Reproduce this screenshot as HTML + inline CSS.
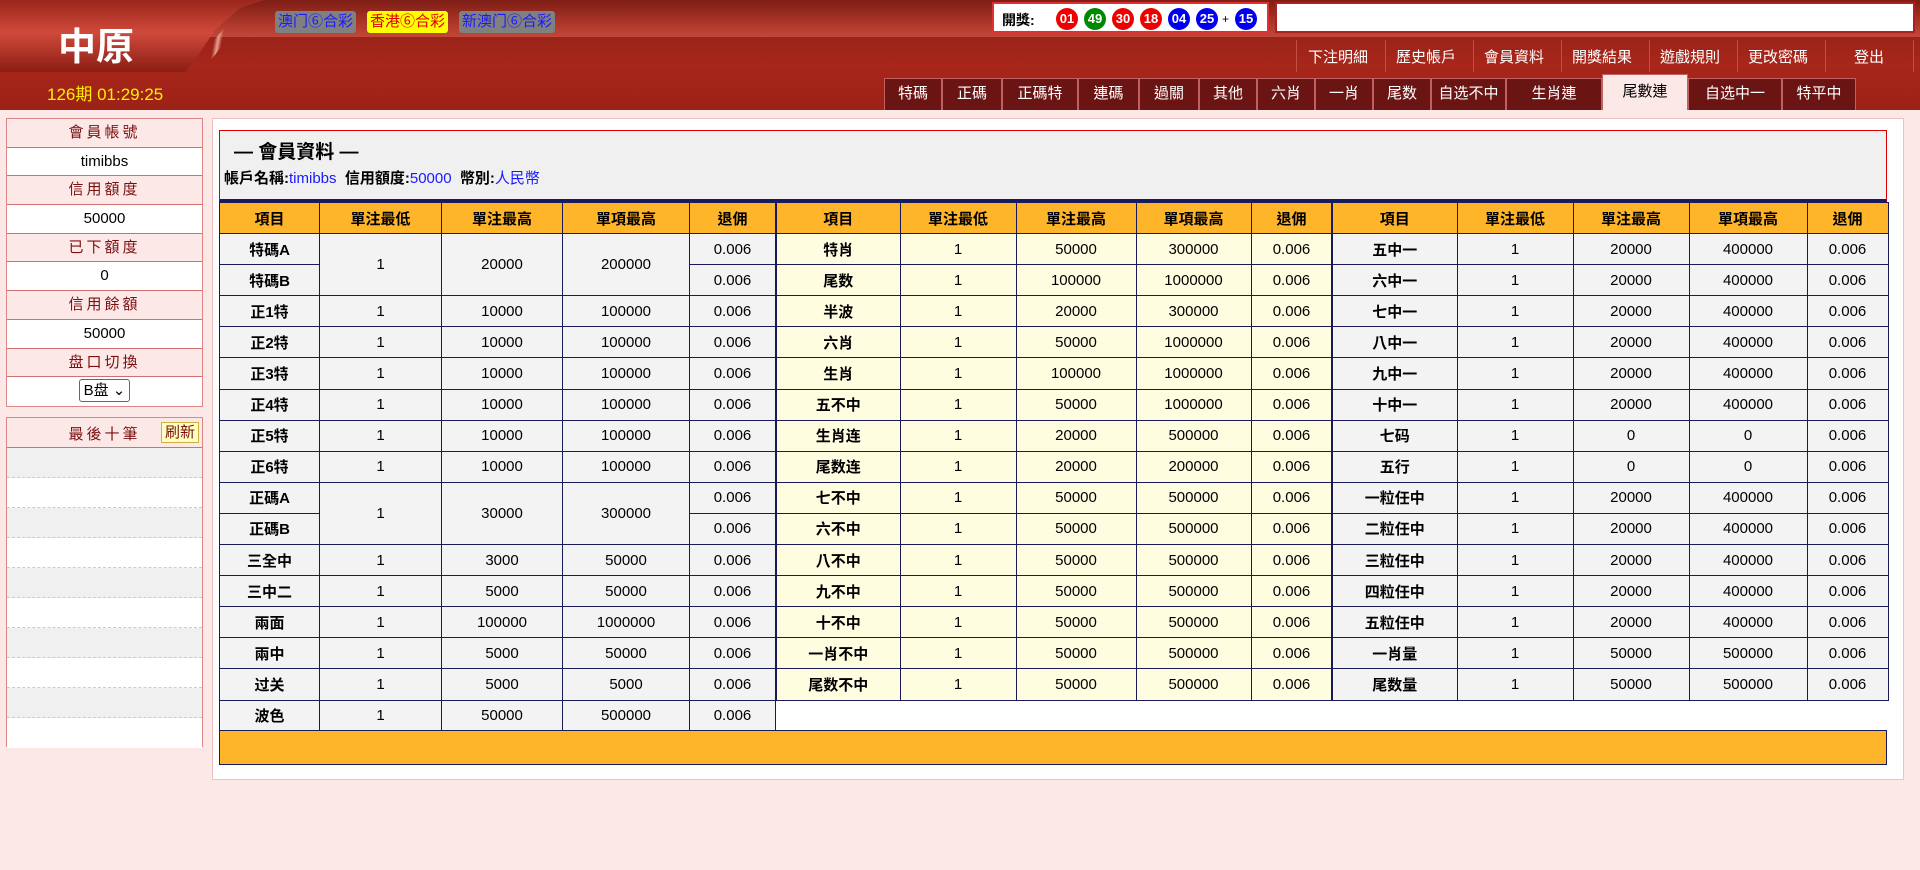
<!DOCTYPE html>
<html><head><meta charset="utf-8"><style>
*{margin:0;padding:0;box-sizing:border-box}
body{width:1920px;height:870px;background:#fde8e8;font-family:"Liberation Sans","Noto Sans CJK TC",sans-serif;position:relative;overflow:hidden;font-size:15px}
.hdr{position:absolute;left:0;top:0;width:1920px;height:110px;background:linear-gradient(#8a1f16,#a8261a 60%,#9c2116)}
.top{position:absolute;left:0;top:0;width:1920px;height:37px;background:linear-gradient(#7d1d15,#b23a2c 70%,#c0483a)}
.logo{position:absolute;left:0;top:0;width:265px;height:72px;background:linear-gradient(#9a261c,#d04a3b 45%,#8c1d15);clip-path:polygon(0 0,265px 0,240px 8px,215px 30px,195px 60px,185px 72px,0 72px)}
.logoedge{position:absolute;left:180px;top:0;width:90px;height:72px;background:linear-gradient(100deg,transparent 40%,#e8a090 44%,transparent 48%);clip-path:polygon(80px 0,90px 0,60px 20px,35px 55px,20px 72px,10px 72px,30px 45px,55px 15px)}
.logo span{position:absolute;left:58px;top:16px;color:#fff;font-size:38px;font-weight:bold}
.per{position:absolute;left:47px;top:80px;color:#ffee00;font-size:17px}
.lb{position:absolute;top:11px;height:22px;border-radius:3px;background:#808080;color:#1a1aff;font-size:15px;line-height:22px;padding:0 3px}
.draw{position:absolute;left:992px;top:2px;width:277px;height:31px;background:#fff;border:2px solid #e03030}
.draw b{position:absolute;left:8px;top:6px;font-size:14px;font-weight:bold}
.ball{position:absolute;top:4px;width:22px;height:22px;border-radius:50%;color:#fff;font-size:13px;font-weight:bold;line-height:22px;text-align:center}
.marq{position:absolute;left:1275px;top:2px;width:640px;height:31px;background:#fff;border:2px solid #b02020}
.links{position:absolute;top:46px;color:#fff;font-size:15px}
.links span{position:absolute;white-space:nowrap}
.sep{position:absolute;top:40px;width:1px;height:32px;background:#c05040}
.tab{position:absolute;top:78px;height:32px;background:#6a1414;border:1px solid #c06060;border-bottom:none;color:#fff;font-size:15px;text-align:center;line-height:30px}
.tab.on{background:#fde8e8;color:#000;top:74px;height:36px;line-height:34px}
.side{position:absolute;left:6px;width:197px;border:1px solid #d88;}
.side div{height:28.7px;line-height:28px;text-align:center;border-bottom:1px solid #d07070;font-size:15px}
.side .l{background:#fde8e8;color:#7a1010;letter-spacing:3px}
.side .v{background:#fff;color:#000}
.main{position:absolute;left:212px;top:118px;width:1692px;height:662px;background:#fff;border:1px solid #f0c0c0}
.tbox{position:absolute;left:219px;top:130px;width:1668px;height:72px;background:#f0f0f0;border-top:1px solid #d00;border-left:1px solid #d00;border-right:1px solid #d00;border-bottom:3px solid #1a1a5a}
.tbox h1{position:absolute;left:14px;top:6px;font-size:19px}
.tbox p{position:absolute;left:4px;top:36px;font-size:15px;font-weight:bold}
.tbox p i{font-style:normal;font-weight:normal;color:#1a1aff}
table{position:absolute;top:202px;border-collapse:collapse;table-layout:fixed}
td,th{border:1px solid #1a1a5a;height:31.1px;text-align:center;font-size:15px;font-weight:normal}
th{background:#ffb52a;font-weight:bold}
td:first-child{font-weight:bold}
.t1 td,.t3 td{background:#f3f3f3}
.t2 td{background:#fffde0}
.bar{position:absolute;left:219px;top:730px;width:1668px;height:35px;background:#ffb52a;border:1px solid #1a1a5a}
</style></head><body>
<div class="hdr"></div><div class="top"></div>
<div class="logo"><span>中原</span></div><div class="logoedge"></div>
<div class="per">126期 01:29:25</div>
<div class="lb" style="left:275px">澳门⑥合彩</div>
<div class="lb" style="left:367px;background:#ffff00;color:#e00000">香港⑥合彩</div>
<div class="lb" style="left:459px">新澳门⑥合彩</div>
<div class="draw"><b>開獎:</b>
<div class="ball" style="left:62px;background:#e00">01</div>
<div class="ball" style="left:90px;background:#080">49</div>
<div class="ball" style="left:118px;background:#e00">30</div>
<div class="ball" style="left:146px;background:#e00">18</div>
<div class="ball" style="left:174px;background:#00e">04</div>
<div class="ball" style="left:202px;background:#00e">25</div>
<span style="position:absolute;left:228px;top:8px;font-size:12px">+</span>
<div class="ball" style="left:241px;background:#00e">15</div></div>
<div class="marq"></div>
<div class="links">
<span style="left:1308px">下注明細</span><span style="left:1396px">歷史帳戶</span><span style="left:1484px">會員資料</span><span style="left:1572px">開獎結果</span><span style="left:1660px">遊戲規則</span><span style="left:1748px">更改密碼</span><span style="left:1854px">登出</span></div>
<div class="sep" style="left:1296px"></div><div class="sep" style="left:1385px"></div><div class="sep" style="left:1473px"></div><div class="sep" style="left:1561px"></div><div class="sep" style="left:1649px"></div><div class="sep" style="left:1737px"></div><div class="sep" style="left:1825px"></div><div class="sep" style="left:1913px"></div>
<div class="tab" style="left:884px;width:58px">特碼</div>
<div class="tab" style="left:942px;width:60px">正碼</div>
<div class="tab" style="left:1002px;width:76px">正碼特</div>
<div class="tab" style="left:1078px;width:61px">連碼</div>
<div class="tab" style="left:1139px;width:60px">過關</div>
<div class="tab" style="left:1199px;width:58px">其他</div>
<div class="tab" style="left:1257px;width:58px">六肖</div>
<div class="tab" style="left:1315px;width:58px">一肖</div>
<div class="tab" style="left:1373px;width:58px">尾数</div>
<div class="tab" style="left:1431px;width:75px">自选不中</div>
<div class="tab" style="left:1506px;width:96px">生肖連</div>
<div class="tab on" style="left:1602px;width:86px">尾數連</div>
<div class="tab" style="left:1688px;width:94px">自选中一</div>
<div class="tab" style="left:1782px;width:74px">特平中</div>

<div class="side" style="top:118px">
<div class="l">會員帳號</div><div class="v">timibbs</div><div class="l">信用額度</div><div class="v">50000</div><div class="l">已下額度</div><div class="v">0</div><div class="l">信用餘額</div><div class="v">50000</div><div class="l">盘口切換</div><div class="v" style="border:none;padding-top:2px;line-height:22px"><span style="display:inline-block;border:1px solid #666;border-radius:3px;padding:0 4px;height:23px;font-size:15px">B盘 ⌄</span></div>
</div>
<div class="side" style="top:417px;height:330px;background:#fff">
<div class="l" style="height:30px;line-height:34px;position:relative">最後十筆<span style="position:absolute;right:3px;top:4px;height:21px;line-height:19px;background:#ffffc0;border:1px solid #d0b040;letter-spacing:0;padding:0 3px;color:#7a1010">刷新</span></div>
<div style="background:#f0f0f0;border-bottom:1px dashed #ccc;height:30px"></div><div style="background:#fff;border-bottom:1px dashed #ccc;height:30px"></div>
<div style="background:#f0f0f0;border-bottom:1px dashed #ccc;height:30px"></div><div style="background:#fff;border-bottom:1px dashed #ccc;height:30px"></div>
<div style="background:#f0f0f0;border-bottom:1px dashed #ccc;height:30px"></div><div style="background:#fff;border-bottom:1px dashed #ccc;height:30px"></div>
<div style="background:#f0f0f0;border-bottom:1px dashed #ccc;height:30px"></div><div style="background:#fff;border-bottom:1px dashed #ccc;height:30px"></div>
<div style="background:#f0f0f0;border-bottom:1px dashed #ccc;height:30px"></div><div style="background:#fff;border:none;height:30px"></div>
</div>

<div class="main"></div>
<div class="tbox"><h1>— 會員資料 —</h1><p>帳戶名稱:<i>timibbs</i>&nbsp; 信用額度:<i>50000</i>&nbsp; 幣別:<i>人民幣</i></p></div>

<table class="t1" style="left:219px;width:556px">
<colgroup><col style="width:100px"><col style="width:122px"><col style="width:121px"><col style="width:127px"><col style="width:86px"></colgroup>
<tr><th>項目</th><th>單注最低</th><th>單注最高</th><th>單項最高</th><th>退佣</th></tr>
<tr><td>特碼A</td><td rowspan="2">1</td><td rowspan="2">20000</td><td rowspan="2">200000</td><td>0.006</td></tr>
<tr><td>特碼B</td><td>0.006</td></tr>
<tr><td>正1特</td><td>1</td><td>10000</td><td>100000</td><td>0.006</td></tr>
<tr><td>正2特</td><td>1</td><td>10000</td><td>100000</td><td>0.006</td></tr>
<tr><td>正3特</td><td>1</td><td>10000</td><td>100000</td><td>0.006</td></tr>
<tr><td>正4特</td><td>1</td><td>10000</td><td>100000</td><td>0.006</td></tr>
<tr><td>正5特</td><td>1</td><td>10000</td><td>100000</td><td>0.006</td></tr>
<tr><td>正6特</td><td>1</td><td>10000</td><td>100000</td><td>0.006</td></tr>
<tr><td>正碼A</td><td rowspan="2">1</td><td rowspan="2">30000</td><td rowspan="2">300000</td><td>0.006</td></tr>
<tr><td>正碼B</td><td>0.006</td></tr>
<tr><td>三全中</td><td>1</td><td>3000</td><td>50000</td><td>0.006</td></tr>
<tr><td>三中二</td><td>1</td><td>5000</td><td>50000</td><td>0.006</td></tr>
<tr><td>兩面</td><td>1</td><td>100000</td><td>1000000</td><td>0.006</td></tr>
<tr><td>兩中</td><td>1</td><td>5000</td><td>50000</td><td>0.006</td></tr>
<tr><td>过关</td><td>1</td><td>5000</td><td>5000</td><td>0.006</td></tr>
<tr><td>波色</td><td>1</td><td>50000</td><td>500000</td><td>0.006</td></tr>
</table>

<table class="t2" style="left:775px;width:556px;border-left:2px solid #1a1a5a">
<colgroup><col style="width:124px"><col style="width:116px"><col style="width:120px"><col style="width:115px"><col style="width:81px"></colgroup>
<tr><th>項目</th><th>單注最低</th><th>單注最高</th><th>單項最高</th><th>退佣</th></tr>
<tr><td>特肖</td><td>1</td><td>50000</td><td>300000</td><td>0.006</td></tr>
<tr><td>尾数</td><td>1</td><td>100000</td><td>1000000</td><td>0.006</td></tr>
<tr><td>半波</td><td>1</td><td>20000</td><td>300000</td><td>0.006</td></tr>
<tr><td>六肖</td><td>1</td><td>50000</td><td>1000000</td><td>0.006</td></tr>
<tr><td>生肖</td><td>1</td><td>100000</td><td>1000000</td><td>0.006</td></tr>
<tr><td>五不中</td><td>1</td><td>50000</td><td>1000000</td><td>0.006</td></tr>
<tr><td>生肖连</td><td>1</td><td>20000</td><td>500000</td><td>0.006</td></tr>
<tr><td>尾数连</td><td>1</td><td>20000</td><td>200000</td><td>0.006</td></tr>
<tr><td>七不中</td><td>1</td><td>50000</td><td>500000</td><td>0.006</td></tr>
<tr><td>六不中</td><td>1</td><td>50000</td><td>500000</td><td>0.006</td></tr>
<tr><td>八不中</td><td>1</td><td>50000</td><td>500000</td><td>0.006</td></tr>
<tr><td>九不中</td><td>1</td><td>50000</td><td>500000</td><td>0.006</td></tr>
<tr><td>十不中</td><td>1</td><td>50000</td><td>500000</td><td>0.006</td></tr>
<tr><td>一肖不中</td><td>1</td><td>50000</td><td>500000</td><td>0.006</td></tr>
<tr><td>尾数不中</td><td>1</td><td>50000</td><td>500000</td><td>0.006</td></tr>
</table>

<table class="t3" style="left:1331px;width:556px;border-left:2px solid #1a1a5a">
<colgroup><col style="width:125px"><col style="width:116px"><col style="width:116px"><col style="width:118px"><col style="width:81px"></colgroup>
<tr><th>項目</th><th>單注最低</th><th>單注最高</th><th>單項最高</th><th>退佣</th></tr>
<tr><td>五中一</td><td>1</td><td>20000</td><td>400000</td><td>0.006</td></tr>
<tr><td>六中一</td><td>1</td><td>20000</td><td>400000</td><td>0.006</td></tr>
<tr><td>七中一</td><td>1</td><td>20000</td><td>400000</td><td>0.006</td></tr>
<tr><td>八中一</td><td>1</td><td>20000</td><td>400000</td><td>0.006</td></tr>
<tr><td>九中一</td><td>1</td><td>20000</td><td>400000</td><td>0.006</td></tr>
<tr><td>十中一</td><td>1</td><td>20000</td><td>400000</td><td>0.006</td></tr>
<tr><td>七码</td><td>1</td><td>0</td><td>0</td><td>0.006</td></tr>
<tr><td>五行</td><td>1</td><td>0</td><td>0</td><td>0.006</td></tr>
<tr><td>一粒任中</td><td>1</td><td>20000</td><td>400000</td><td>0.006</td></tr>
<tr><td>二粒任中</td><td>1</td><td>20000</td><td>400000</td><td>0.006</td></tr>
<tr><td>三粒任中</td><td>1</td><td>20000</td><td>400000</td><td>0.006</td></tr>
<tr><td>四粒任中</td><td>1</td><td>20000</td><td>400000</td><td>0.006</td></tr>
<tr><td>五粒任中</td><td>1</td><td>20000</td><td>400000</td><td>0.006</td></tr>
<tr><td>一肖量</td><td>1</td><td>50000</td><td>500000</td><td>0.006</td></tr>
<tr><td>尾数量</td><td>1</td><td>50000</td><td>500000</td><td>0.006</td></tr>
</table>
<div class="bar"></div>
</body></html>
